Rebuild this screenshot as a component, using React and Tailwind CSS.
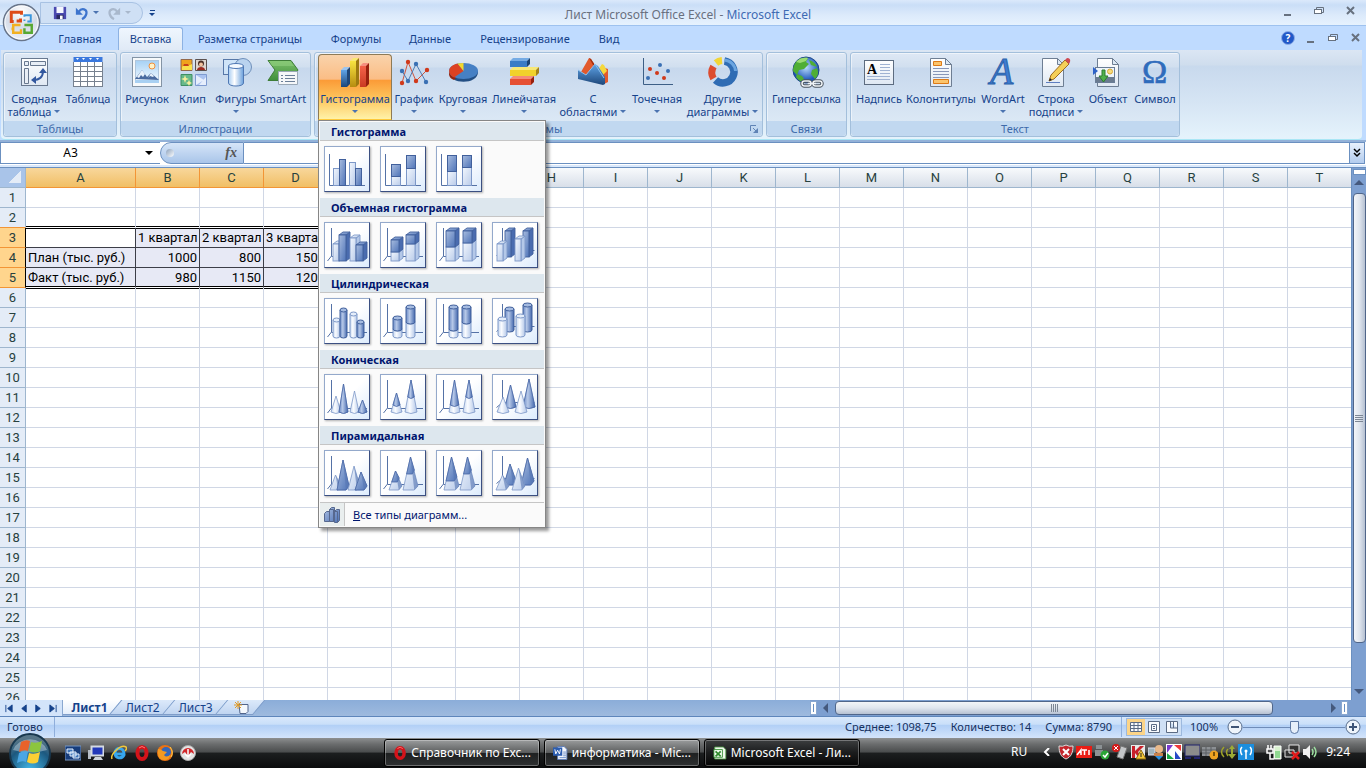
import React, { useState } from "react";
import clsx from "clsx";

const UI_FONT = "font-['Noto_Sans','Open_Sans',sans-serif]";
const CELL_FONT = "font-[Roboto,'Noto_Sans',sans-serif]";

const TABS = [
  { label: "Главная", width: "w-[76px]" },
  { label: "Вставка", width: "w-[65px]" },
  { label: "Разметка страницы", width: "w-[134px]" },
  { label: "Формулы", width: "w-[78px]" },
  { label: "Данные", width: "w-[70px]" },
  { label: "Рецензирование", width: "w-[120px]" },
  { label: "Вид", width: "w-12" },
];

/* ---------- ribbon icons, all on a 32x32 grid ---------- */

const Icon = ({ children }) => (
  <svg viewBox="0 0 32 32" className="w-8 h-8 shrink-0 overflow-visible" aria-hidden="true">
    {children}
  </svg>
);

const PivotIcon = () => (
  <Icon>
    <rect x="3.500" y="2.500" width="26" height="27" fill="url(#paper)" stroke="#68788f" />
    <path d="M6.500 5.500h4v4h-4zM12.500 5.500h15v4h-15zM6.500 12.500h4v15h-4z" fill="#e8eef6" stroke="#68788f" />
    <path d="M15 24c7 0 10-3 10-9" fill="none" stroke="#33589f" strokeWidth="2" />
    <path d="M25 12l-4 5h8zM13 24l5-4v8z" fill="#33589f" />
  </Icon>
);

const TableIcon = () => (
  <Icon>
    <rect x="2" y="1" width="28" height="29" fill="#fff" />
    <rect x="1.500" y="1" width="29" height="5" fill="#3b78dd" />
    <path d="M4 2h3l-1.500 2zM10 2h3l-1.500 2zM17 2h3l-1.500 2zM24 2h3l-1.500 2z" fill="#fff" />
    <path d="M1.500 6v24M8.500 6v24M15.500 6v24M22.500 6v24M30.500 6v24M1 10.500h30M1 15.500h30M1 20.500h30M1 25.500h30M1 30.500h30" stroke="#77818f" />
  </Icon>
);

const PictureIcon = () => (
  <Icon>
    <rect x="1.500" y="1.500" width="29" height="29" fill="#f6f9fb" stroke="#8494a5" />
    <rect x="4.500" y="4.500" width="23" height="20" fill="url(#sky)" stroke="#b0c6dc" />
    <circle cx="21" cy="10" r="3" fill="#fff3c8" stroke="#f09040" />
    <path d="M4 23l7-9 5 7 4-4 8 7z" fill="#496a9f" />
    <path d="M11 14l3 4-2 3-2-2-2 3-2-1zM20 17l3 3-1 1-3-1-2 2z" fill="#e9f2fb" />
    <path d="M4 24h24v3H4z" fill="#a8d0f2" />
  </Icon>
);

const ClipIcon = () => (
  <Icon>
    <path d="M4 3.500h11v11H4z" fill="#f0a21c" stroke="#94694a" />
    <path d="M5 11c3-4 6 0 10-3v6H5z" fill="#f9e04c" />
    <path d="M7 8h4l1 2H6z" fill="#c8401a" />
    <path d="M18.500 3.500h11v11h-11z" fill="#ddd5cf" stroke="#5b5150" />
    <circle cx="24" cy="7.500" r="3" fill="#4d2f26" />
    <circle cx="24" cy="8.500" r="2" fill="#f3c3a0" />
    <path d="M20 14c0-4 8-4 8 0z" fill="#9c2a20" />
    <path d="M4 18.500h11v11H4z" fill="#67b98b" stroke="#3f8e64" />
    <path d="M8 19l1 3 3 1-3 1-1 3-1-3-3-1 3-1zM12 24l1 2 2 1-2 1-1 2-1-2-2-1 2-1z" fill="#f7ee9c" />
    <path d="M18.500 18.500h11v11h-11z" fill="#a9c2f0" stroke="#7f9bd0" />
    <path d="M19 19l8 5-8 5zM29 21v8h-7z" fill="#e6eefc" />
  </Icon>
);

const ShapesIcon = () => (
  <Icon>
    <rect x="3.500" y="3.500" width="17" height="15" fill="#cfe4f8" stroke="#5878a8" />
    <circle cx="23" cy="11" r="8.500" fill="#b9d3ef" stroke="#6f8fba" />
    <path d="M8.500 10v17c0 4 15 4 15 0V10z" fill="url(#cyl)" stroke="#4f78b4" />
    <ellipse cx="16" cy="10" rx="7.500" ry="2.500" fill="#f3f9ff" stroke="#4f78b4" />
  </Icon>
);

const SmartArtIcon = () => (
  <Icon>
    <path d="M1 4.500h23l7 9.500-7 10.500H1L8 14z" fill="url(#green)" stroke="#3e7d38" />
    <path d="M2 5h21l4 5H5z" fill="#8fce7f" opacity=".6" />
    <path d="M11.500 15.500h19v13h-19z" fill="#f5f7f9" stroke="#9aa8b6" />
    <path d="M14 19.500h2M18 19.500h10M14 22.500h2M18 22.500h10M14 25.500h2M18 25.500h10" stroke="#6b7f98" />
  </Icon>
);

const Block = ({ x, y, w, h, face, top, side }) => (
  <g>
    <path d={`M${x} ${y}h${w}v${h}h${-w}z`} fill={face} />
    <path d={`M${x} ${y}l3-3h${w}l-3 3z`} fill={top} />
    <path d={`M${x + w} ${y}l3-3v${h}l-3 3z`} fill={side} />
  </g>
);

const ColumnIcon = () => (
  <Icon>
    <Block x={2} y={14} w={6} h={17} face="url(#blueV)" top="#9cc4ee" side="#1f4779" />
    <Block x={11} y={5} w={6} h={26} face="url(#yellowV)" top="#f8e870" side="#9d7a10" />
    <Block x={21} y={10} w={6} h={21} face="url(#redV)" top="#f59080" side="#97200e" />
  </Icon>
);

const LineIcon = () => (
  <Icon>
    <path d="M4 27l6-21 8 19 11-11" fill="none" stroke="#d2553c" />
    <path d="M4 15l6 10 8-17 10 18" fill="none" stroke="#4d7cb4" />
    <g fill="#d0391b">
      <circle cx="4" cy="27" r="2.200" />
      <circle cx="10" cy="6" r="2.200" />
      <circle cx="18" cy="25" r="2.200" />
      <circle cx="29" cy="14" r="2.200" />
    </g>
    <g fill="#3a70b4">
      <circle cx="4" cy="15" r="2.200" />
      <circle cx="10" cy="25" r="2.200" />
      <circle cx="18" cy="8" r="2.200" />
      <circle cx="28" cy="26" r="2.200" />
    </g>
  </Icon>
);

const PieIcon = () => (
  <Icon>
    <path d="M2 16c0 13 29 13 29 0v-1H2z" fill="#234f84" />
    <path d="M2 15v3c0 3 2 5 5 6l3-3z" fill="#97250f" />
    <ellipse cx="16.500" cy="15" rx="14.500" ry="8" fill="#4680c4" />
    <path d="M16.500 15L7 21.500C0 18 0 10 10.500 7.500z" fill="#dd4222" />
    <path d="M16.500 15l-6-7.500q3-.5 6-.5z" fill="#f2d82c" />
  </Icon>
);

const BarIcon = () => (
  <Icon>
    <Block x={2} y={5} w={17} h={6} face="#3a7cc6" top="#76abe4" side="#1c4473" />
    <Block x={2} y={14} w={26} h={6} face="#f1d22c" top="#f7e878" side="#a5841a" />
    <Block x={2} y={23} w={21} h={6} face="#e65034" top="#f58c78" side="#97200e" />
  </Icon>
);

const AreaIcon = () => (
  <Icon>
    <path d="M4 16l8-14 2 1 8 13 6-4 3 1v13l-4 2-20-8z" fill="#e2592c" />
    <path d="M12 2l2 1 8 12-2 1z" fill="#a5300f" />
    <path d="M21 14l4-6 2 1 3 6-5 5z" fill="#f5d83c" />
    <path d="M1 14l8 5 9-11 3 2 7 11v7l-2 1-25-6z" fill="url(#blueV)" />
    <path d="M1 14l8 5 9-11 9 14" fill="none" stroke="#8cc0ee" />
  </Icon>
);

const ScatterIcon = () => (
  <Icon>
    <path d="M2.500 2v26.500H32" fill="none" stroke="#3d5f86" />
    <g fill="#d0391b">
      <circle cx="9" cy="13" r="2" />
      <circle cx="16" cy="17" r="2" />
      <circle cx="23" cy="22" r="2" />
    </g>
    <g fill="#3a70b4">
      <circle cx="7" cy="22" r="2" />
      <circle cx="19" cy="9" r="2" />
      <circle cx="27" cy="15" r="2" />
    </g>
  </Icon>
);

const DoughnutIcon = () => (
  <Icon>
    <path d="M17.500 5a11 11 0 1 1-9 19" fill="none" stroke="#2f6cb4" strokeWidth="7.500" />
    <path d="M17.500 4a12 12 0 0 1 11 11" fill="none" stroke="#6ba5e0" strokeWidth="3" />
    <path d="M6.500 22.500a12 12 0 0 1 0-12" fill="none" stroke="#dc4c30" strokeWidth="7" />
    <path d="M9 7a11 11 0 0 1 6-2.500" fill="none" stroke="#f2d536" strokeWidth="7" />
  </Icon>
);

const LinkIcon = () => (
  <Icon>
    <circle cx="15" cy="14" r="13" fill="url(#globe)" stroke="#1e4687" />
    <path d="M5 6c3-4 8-5 12-4l-2 4 3 2-5 5-5 1-2 5-4-4c0-4 1-6 3-9zM18 4c4 1 7 4 8 7l-6-2zM21 14l5-2c2 5 1 8-2 11l-4-5zM6 18l5 2 4 6c-5 0-8-2-10-5z" fill="#4fae34" />
    <path d="M5 6c3-4 8-5 12-4l-2 3-6 2z" fill="#9adb72" />
    <g fill="none" stroke="#4b5560" strokeWidth="3.500">
      <rect x="11" y="25" width="9" height="5" rx="2.500" />
      <rect x="22" y="25" width="9" height="5" rx="2.500" />
    </g>
    <g fill="none" stroke="#eef2f5" strokeWidth="1.500">
      <rect x="11" y="25" width="9" height="5" rx="2.500" />
      <rect x="22" y="25" width="9" height="5" rx="2.500" />
      <path d="M17 27.500h8" />
    </g>
  </Icon>
);

const TextBoxIcon = () => (
  <Icon>
    <rect x="1.500" y="4.500" width="29" height="24" fill="url(#paper)" stroke="#5d6c80" />
    <text x="4" y="18" fontFamily="Liberation Serif, serif" fontWeight="bold" fontSize="14" fill="#000">A</text>
    <path d="M17 8.500h10M17 11.500h10M17 14.500h10M17 17.500h10M4 20.500h23M4 23.500h23" stroke="#9fb2d2" />
  </Icon>
);

const Page = () => (
  <>
    <path d="M5.500 2.500h15l6 6v22h-21z" fill="url(#paper)" stroke="#6e7e93" />
    <path d="M20.500 2.500v6h6z" fill="#dce8f4" stroke="#6e7e93" />
  </>
);

const HeaderFooterIcon = () => (
  <Icon>
    <Page />
    <path d="M8.500 5.500h8v4h-8zM8.500 23.500h15v4h-15z" fill="#fbc46c" stroke="#dd7a16" />
    <path d="M8 12.500h16M8 15.500h16M8 18.500h16M8 21.500h16" stroke="#8896b8" />
  </Icon>
);

const WordArtIcon = () => (
  <Icon>
    <g fontFamily="Liberation Serif, serif" fontStyle="italic" fontSize="38">
      <text x="3" y="28" fill="#3d7cd0" stroke="#2b62ab">A</text>
    </g>
  </Icon>
);

const SignatureIcon = () => (
  <Icon>
    <path d="M2.500 2.500h15l6 6v22h-21z" fill="url(#paper)" stroke="#6e7e93" />
    <path d="M17.500 2.500v6h6z" fill="#dce8f4" stroke="#6e7e93" />
    <path d="M6 26.500h14" stroke="#5e7ec0" />
    <path d="M9 25l2-6L25 4l4 4-15 15z" fill="#f5cf58" stroke="#9d6b20" />
    <path d="M25 4l2-2q4 0 3 4l-1 2z" fill="#cf4a52" />
    <path d="M9 25l1-3 2 2z" fill="#222" />
  </Icon>
);

const ObjectIcon = () => (
  <Icon>
    <Page />
    <rect x="3.500" y="11.500" width="19" height="15" fill="#eef4fa" stroke="#6a7d96" />
    <path d="M4 21h18v5H4z" fill="#6a7b90" />
    <circle cx="18" cy="15.500" r="2.500" fill="#f7dc7c" stroke="#d8a838" />
    <path d="M10 14h3v6h3l-4.500 6L7 20h3z" fill="#4fb04a" stroke="#2c7c30" />
    <path d="M1 11l5 4-5 4z" fill="#2d62c8" />
  </Icon>
);

const SymbolIcon = () => (
  <Icon>
    <text x="3" y="27" fontFamily="Liberation Serif, serif" fontSize="34" fill="#2f6cbc" stroke="#2f6cbc" strokeWidth=".6">Ω</text>
  </Icon>
);

const GROUPS = [
  {
    name: "Таблицы",
    items: [
      { lines: ["Сводная", "таблица"], icon: PivotIcon, width: "w-14", arrow: true },
      { lines: ["Таблица"], icon: TableIcon, width: "w-[52px]" },
    ],
  },
  {
    name: "Иллюстрации",
    items: [
      { lines: ["Рисунок"], icon: PictureIcon, width: "w-12" },
      { lines: ["Клип"], icon: ClipIcon, width: "w-[43px]" },
      { lines: ["Фигуры"], icon: ShapesIcon, width: "w-11", arrow: true },
      { lines: ["SmartArt"], icon: SmartArtIcon, width: "w-[50px]" },
    ],
  },
  {
    name: "Диаграммы",
    launcher: true,
    items: [
      { lines: ["Гистограмма"], icon: ColumnIcon, width: "w-[74px]", arrow: true, open: true },
      { lines: ["График"], icon: LineIcon, width: "w-11", arrow: true },
      { lines: ["Круговая"], icon: PieIcon, width: "w-[54px]", arrow: true },
      { lines: ["Линейчатая"], icon: BarIcon, width: "w-[68px]", arrow: true },
      { lines: ["С", "областями"], icon: AreaIcon, width: "w-[70px]", arrow: true },
      { lines: ["Точечная"], icon: ScatterIcon, width: "w-[58px]", arrow: true },
      { lines: ["Другие", "диаграммы"], icon: DoughnutIcon, width: "w-[73px]", arrow: true },
    ],
  },
  {
    name: "Связи",
    items: [{ lines: ["Гиперссылка"], icon: LinkIcon, width: "w-[75px]" }],
  },
  {
    name: "Текст",
    items: [
      { lines: ["Надпись"], icon: TextBoxIcon, width: "w-[52px]" },
      { lines: ["Колонтитулы"], icon: HeaderFooterIcon, width: "w-[72px]" },
      { lines: ["WordArt"], icon: WordArtIcon, width: "w-[52px]", arrow: true },
      { lines: ["Строка", "подписи"], icon: SignatureIcon, width: "w-[54px]", arrow: true },
      { lines: ["Объект"], icon: ObjectIcon, width: "w-[50px]" },
      { lines: ["Символ"], icon: SymbolIcon, width: "w-11" },
    ],
  },
];

/* ---------- chart gallery ---------- */

// x, width, top, bottom, split (everything above split is dark)
const FLAT = [
  [[9, 6, 22, 39, 0], [15, 6, 13, 39, 39], [25, 6, 16, 39, 0], [31, 6, 22, 39, 39]],
  [[11, 9, 18, 39, 30], [26, 9, 9, 39, 22]],
  [[11, 9, 9, 39, 25], [26, 9, 9, 39, 21]],
];
const BOX = [
  [[9, 6, 22, 39, 0], [15, 7, 13, 39, 39], [26, 6, 16, 39, 0], [32, 7, 23, 39, 39]],
  [[11, 8, 18, 39, 30], [26, 9, 13, 39, 22]],
  [[10, 9, 9, 39, 25], [27, 9, 9, 39, 21]],
  [[13, 6, 9, 35, 35], [31, 6, 9, 35, 35], [5, 6, 22, 39, 0], [23, 6, 17, 39, 0]],
];
const ROUND = [
  [[9, 7, 22, 38, 0], [16, 7, 12, 38, 38], [26, 7, 16, 38, 0], [33, 7, 24, 38, 38]],
  [[13, 9, 20, 38, 31], [26, 9, 9, 38, 24]],
  [[13, 9, 9, 38, 31], [26, 9, 9, 38, 24]],
  [[13, 9, 11, 32, 32], [31, 9, 7, 32, 32], [6, 9, 21, 37, 0], [24, 9, 18, 37, 0]],
];
const CONES = [
  [[7, 10, 22, 39, 0], [15, 9, 10, 39, 39], [26, 9, 17, 39, 0], [34, 9, 26, 39, 39]],
  [[11, 11, 19, 39, 32], [25, 12, 6, 39, 24]],
  [[13, 11, 6, 39, 32], [27, 12, 6, 39, 24]],
  [[13, 11, 11, 34, 34], [31, 12, 5, 34, 34], [5, 12, 23, 39, 0], [23, 12, 17, 39, 0]],
];
const PYRAMIDS = [
  [[6, 11, 25, 40, 0], [13, 12, 10, 40, 40], [24, 12, 16, 40, 0], [31, 12, 22, 40, 40]],
  [[9, 13, 21, 40, 32], [23, 15, 7, 40, 24]],
  [[8, 15, 7, 40, 31], [24, 15, 7, 40, 24]],
  [[12, 12, 14, 35, 35], [29, 13, 8, 35, 35], [4, 13, 25, 40, 0], [20, 13, 18, 40, 0]],
];
const SHAPES = { flat: FLAT, box: BOX, cylinder: ROUND, cone: CONES, pyramid: PYRAMIDS };

const GALLERY = [
  { title: "Гистограмма", kind: "flat", count: 3 },
  { title: "Объемная гистограмма", kind: "box", count: 4 },
  { title: "Цилиндрическая", kind: "cylinder", count: 4 },
  { title: "Коническая", kind: "cone", count: 4 },
  { title: "Пирамидальная", kind: "pyramid", count: 4 },
];

const Segment = ({ kind, x, w, top, bottom, dark }) => {
  const fill = dark ? "url(#dark)" : "url(#light)";
  const stroke = dark ? "#41609c" : "#7d98c8";
  const h = bottom - top;
  if (kind === "flat") {
    return <rect x={x + 0.5} y={top + 0.5} width={w} height={h} fill={fill} stroke={stroke} />;
  }
  if (kind === "box") {
    return (
      <g fill={fill} stroke={stroke} strokeWidth=".9">
        <path d={`M${x + w} ${top}l4-3v${h}l-4 3z`} fill={dark ? "#4a6caf" : "#b4c8e8"} />
        <path d={`M${x} ${top}l4-3h${w}l-4 3z`} />
        <rect x={x} y={top} width={w} height={h} />
      </g>
    );
  }
  const r = w / 2;
  return (
    <g fill={dark ? "url(#darkRound)" : "url(#lightRound)"} stroke={stroke}>
      <path d={`M${x} ${top}v${h}a${r} 2 0 0 0 ${w} 0v${-h}z`} />
      <ellipse cx={x + r} cy={top} rx={r} ry="2" fill={dark ? "#a5bbe0" : "#e4edfa"} />
    </g>
  );
};

const Spike = ({ kind, x, w, top, bottom, split }) => {
  const cx = x + w / 2;
  const outline = (b, half) =>
    kind === "cone"
      ? `M${cx} ${top}L${cx - half} ${b - 1}q${half} 3 ${half * 2} 0z`
      : `M${cx} ${top}L${cx - half} ${b}h${half * 1.5}l${half / 2}-4z`;
  const part = (split - top) / (bottom - top);
  const round = kind === "cone";
  return (
    <g strokeWidth=".8">
      <path d={outline(bottom, w / 2)} fill={round ? "url(#lightRound)" : "url(#light)"} stroke="#7d98c8" />
      {split > 0 && <path d={outline(split, (w / 2) * part)} fill={round ? "url(#darkRound)" : "url(#dark)"} stroke="#4866a4" />}
      {kind === "pyramid" && (
        <path d={`M${cx} ${top}L${cx + w / 4} ${bottom}L${cx + w / 2} ${bottom - 4}z`} fill="#5676b2" opacity=".6" />
      )}
    </g>
  );
};

const Thumb = ({ kind, variant }) => {
  const pointed = kind === "cone" || kind === "pyramid";
  return (
    <svg viewBox="1 1 44 44" className="w-11 h-11 block" aria-hidden="true">
      {kind === "flat" ? (
        <path d="M5.500 8v31.500H41" fill="none" stroke="#5572a6" />
      ) : variant === 3 ? (
        <path d="M10.500 6v22.500l-6 5M10.500 28.500h32" fill="none" stroke="#5572a6" />
      ) : (
        <path d="M7.500 6v28l-4 5M7.500 34.500H43" fill="none" stroke="#5572a6" />
      )}
      {SHAPES[kind][variant].map(([x, w, top, bottom, split], i) => {
        if (pointed) {
          return <Spike key={i} kind={kind} x={x} w={w} top={top} bottom={bottom} split={split} />;
        }
        const mixed = split > 0 && split < bottom;
        return (
          <g key={i}>
            <Segment kind={kind} x={x} w={w} top={mixed ? split : top} bottom={bottom} dark={split === bottom} />
            {mixed && <Segment kind={kind} x={x} w={w} top={top} bottom={split} dark />}
          </g>
        );
      })}
    </svg>
  );
};

const ChartMenu = () => (
  <div className="absolute left-0 top-full z-30 w-[228px] border border-[#868686] bg-[#fafafa] p-px shadow-[3px_3px_3px_rgba(0,0,0,0.4)]">
    {GALLERY.map((section) => (
      <section key={section.title}>
        <h3 className="h-[19px] border-b border-[#c5c5c5] bg-[#dde7ee] pl-[11px] text-[11px] leading-[19px] font-bold text-[#00156e]">
          {section.title}
        </h3>
        <div className="flex h-[57px] gap-[10px] px-1 pt-[5px]">
          {Array.from({ length: section.count }, (_, i) => (
            <button
              key={i}
              aria-label={`${section.title} ${i + 1}`}
              className="h-[46px] w-[46px] border border-t-[#94a9cb] border-l-[#94a9cb] border-r-[#3b4f81] border-b-[#3b4f81] bg-gradient-to-br from-white via-white to-[#dcebfc] shadow-[1px_1px_2px_rgba(0,0,0,0.3)]"
            >
              <Thumb kind={section.kind} variant={i} />
            </button>
          ))}
        </div>
      </section>
    ))}
    <button className="flex h-6 w-full items-stretch border-t border-[#c5c5c5] text-left text-[11px] text-[#00156e]">
      <span className="flex w-[25px] items-center justify-center border-r border-[#c5c5c5] bg-[#e9eeee]">
        <svg viewBox="0 0 18 18" className="h-[18px] w-[18px]" aria-hidden="true">
          <g fill="url(#dark)" stroke="#56688f">
            <path d="M1.500 7.500l2-2h3v10h-5zM6.500 3.500l2-2h3v14h-5zM11.500 5.500l2-2h3v11l-2 2h-3z" />
            <path d="M11.500 5.500h3v11M6.500 3.500h4v12" fill="none" />
          </g>
        </svg>
      </span>
      <span className="pl-2 leading-[23px]">
        <u>В</u>се типы диаграмм...
      </span>
    </button>
  </div>
);

/* ---------- ribbon ---------- */

const Arrow = () => <span className="inline-block border-x-[3px] border-t-[3px] border-x-transparent border-t-[#4b73b0]" />;

const RibbonButton = ({ item }) => {
  const Glyph = item.icon;
  const last = item.lines.length - 1;
  return (
    <div className="relative">
      <button
        aria-expanded={item.open}
        className={clsx(
          "flex h-[66px] flex-col items-center whitespace-nowrap border pt-px text-[11px] leading-[13px] text-[#15428b]",
          item.width,
          item.open
            ? "rounded-t-sm border-[#8e7a55] border-b-[#ffca3a] bg-[linear-gradient(#f9d3ab_0%,#fbbd85_38%,#fb9a36_39%,#fdc860_70%,#fff2a8_100%)]"
            : "border-transparent"
        )}
      >
        <Glyph />
        <span className="mt-1">{item.lines[0]}</span>
        {last > 0 ? (
          <span className="flex items-center gap-[3px]">
            {item.lines[1]}
            <Arrow />
          </span>
        ) : (
          item.arrow && (
            <span className="mt-[5px] flex">
              <Arrow />
            </span>
          )
        )}
      </button>
      {item.open && <ChartMenu />}
    </div>
  );
};

const Ribbon = () => (
  <div className="mr-1 ml-px flex h-[90px] gap-[3px] rounded-b border-b border-[#a9e6f5] bg-[linear-gradient(#dbe6f4_0%,#cfdded_17%,#c8d9ed_18%,#d6e5f4_60%,#e5f3fc_100%)] px-[2px] pt-[2px] pb-[2px]">
    {GROUPS.map((group) => (
      <section key={group.name} className="flex flex-col rounded-[3px] border border-[#a3bfdb] bg-[linear-gradient(#dee8f5_0%,#d1dfef_17%,#c7d8ed_18%,#dbe8f5_82%)] shadow-[inset_1px_1px_0_rgba(255,255,255,0.5)]">
        <div className={clsx("flex h-[68px] items-start pt-px", group.launcher ? "px-[3px]" : "px-[2px]")}>
          {group.items.map((item) => (
            <RibbonButton key={item.lines.join(" ")} item={item} />
          ))}
        </div>
        <div className="flex flex-1 items-center rounded-b-sm bg-[#c1d8f0]">
          <span className="flex-1 text-center text-[11px] leading-[15px] text-[#3e6aaa]">{group.name}</span>
          {group.launcher && (
            <button aria-label="Диаграммы: параметры" className="pr-1 pl-1">
              <svg viewBox="0 0 8 8" className="h-2 w-2" aria-hidden="true">
                <path d="M.5 6V.5H6M3 3l3 3" fill="none" stroke="#5f83b5" />
                <path d="M8 3v5H3z" fill="#5f83b5" />
              </svg>
            </button>
          )}
        </div>
      </section>
    ))}
  </div>
);

/* ---------- window chrome ---------- */

const OfficeButton = () => (
  <button aria-label="Кнопка Office" className="absolute top-[3px] left-[2px] z-20 h-[39px] w-[39px]">
    <svg viewBox="0 0 40 40" className="h-full w-full" aria-hidden="true">
      <circle cx="20" cy="20" r="18.500" fill="url(#orb)" stroke="#68758a" strokeWidth="1.500" />
      <circle cx="20" cy="20" r="17" fill="none" stroke="#fff" opacity=".8" />
      <g fill="none">
        <path d="M20 12V9.500H9.500v9.500H12M15 18.500h4V16" stroke="#dd4a18" strokeWidth="3" />
        <path d="M23 14v-1.500h6.500V19H26M23 17v1.500" stroke="#3b96dc" strokeWidth="2" />
        <path d="M19 22.500h-7.500v8h8V27M11 25v3" stroke="#f2b020" strokeWidth="2.500" />
        <path d="M23 22.500h7.500v8H23V26" stroke="#58a832" strokeWidth="2.500" />
      </g>
    </svg>
  </button>
);

const WindowButtons = ({ small }) => (
  <div className={clsx("flex items-center text-[#6b7585]", small ? "gap-[11px]" : "gap-5")}>
    <button aria-label="Свернуть" className="flex h-3 w-3 items-end justify-center">
      <span className="mb-px h-[2px] w-[7px] bg-[#67717f]" />
    </button>
    <button aria-label="Восстановить" className="h-3 w-3">
      <svg viewBox="0 0 12 12" className="h-3 w-3" aria-hidden="true">
        <path d="M3.500 4V2.500h7v5H9" fill="none" stroke="#67717f" />
        <rect x="1.500" y="4.500" width="7" height="4" fill="#fff" stroke="#67717f" />
        <path d="M1 4.500h8" stroke="#67717f" />
      </svg>
    </button>
    <button aria-label="Закрыть" className="h-3 w-3">
      <svg viewBox="0 0 12 12" className="h-3 w-3" aria-hidden="true">
        <path d="M2 2l7 7M9 2l-7 7" stroke="#67717f" strokeWidth="2" />
      </svg>
    </button>
  </div>
);

const TitleBar = () => (
  <header className="relative flex h-[25px] items-center bg-[linear-gradient(#dbe9fb_0%,#cadef7_20%,#dceafb_60%,#e6f2fe_100%)] pl-[40px]">
    <div className="flex h-[22px] w-[103px] items-center rounded-r-full border border-[#a8c2e3] bg-[#cfe0f5] pl-3">
      <button aria-label="Сохранить">
        <svg viewBox="0 0 16 16" className="h-[14px] w-[14px]" aria-hidden="true">
          <path d="M1 1h14v14H1z" fill="#4a49b0" />
          <path d="M4 1h8v7H4z" fill="#f4f6ff" />
          <path d="M4 10h8v5H4z" fill="#2a2a60" />
          <path d="M8 11h3v4H8z" fill="#fff" />
        </svg>
      </button>
      <button aria-label="Отменить" className="ml-2">
        <svg viewBox="0 0 16 16" className="h-[14px] w-[14px]" aria-hidden="true">
          <path d="M4 7c4-6 10-3 9 2q-1 4-5 6" fill="none" stroke="#3d74cd" strokeWidth="2.500" />
          <path d="M1 2v8h8z" fill="#3d74cd" />
        </svg>
      </button>
      <span className="ml-1 flex"><Arrow /></span>
      <button aria-label="Повторить" className="ml-2">
        <svg viewBox="0 0 16 16" className="h-[14px] w-[14px]" aria-hidden="true">
          <path d="M12 7C8 1 2 4 3 9q1 4 5 6" fill="none" stroke="#a9b8cc" strokeWidth="2.500" />
          <path d="M15 2v8H7z" fill="#a9b8cc" />
        </svg>
      </button>
      <span className="ml-1 border-x-[3px] border-t-[3px] border-x-transparent border-t-[#a9b8cc]" />
    </div>
    <button aria-label="Настройка панели быстрого доступа" className="ml-[6px] flex flex-col items-center gap-[2px]">
      <span className="h-px w-[5px] bg-[#15428b]" />
      <span className="border-x-[3px] border-t-[3px] border-x-transparent border-t-[#15428b]" />
    </button>
    <h1 className="flex-1 pt-1 text-center text-[12px] leading-4 text-[#69707f]">
      Лист Microsoft Office Excel - <span className="text-[#3e6ab3]">Microsoft Excel</span>
    </h1>
    <div className="pr-[9px] pb-1 pl-[60px]">
      <WindowButtons />
    </div>
  </header>
);

const TabStrip = ({ active, onSelect }) => (
  <nav className="flex h-[25px] border-t border-[#9ec2ef] bg-[#bfdbff] pl-[42px]">
    {TABS.map((tab) => (
      <button
        key={tab.label}
        onClick={() => onSelect(tab.label)}
        className={clsx(
          "mt-px border border-b-0 whitespace-nowrap text-center text-[11px] leading-5 text-[#15428b]",
          tab.width,
          active === tab.label
            ? "relative z-10 rounded-t-[3px] border-[#8db2e3] bg-gradient-to-b from-[#eff6fe] to-[#e0eaf6]"
            : "border-transparent"
        )}
      >
        {tab.label}
      </button>
    ))}
    <div className="flex flex-1 items-center justify-end gap-[9px] pr-1">
      <button aria-label="Справка" className="h-[14px] w-[14px] rounded-full border border-[#8eaee8] bg-[#2158c8] text-[10px] leading-3 font-bold text-white">
        ?
      </button>
      <WindowButtons small />
    </div>
  </nav>
);

const FormulaBar = () => (
  <div className="flex h-[27px] border-y-2 border-t-[#93b1d8] border-b-[#d9e8fb] bg-white">
    <div className="flex h-[22px] w-[160px] items-center border-y border-l border-[#6b90c0]">
      <input aria-label="Имя" defaultValue="A3" className="w-[138px] bg-transparent pl-px text-center text-[12px] leading-5 text-black outline-none" />
      <button aria-label="Список имен" className="ml-[6px] border-x-4 border-t-4 border-x-transparent border-t-black" />
    </div>
    <div className="flex h-[22px] w-[84px] items-center justify-between rounded-l-full border border-[#6b90c0] bg-gradient-to-b from-[#d6e5f8] to-[#a9c5e9] pr-[6px] pl-[5px]">
      <span className="h-2 w-2 rounded-full bg-gradient-to-br from-[#8da2bc] to-white" />
      <button aria-label="Вставить функцию" className="font-['Liberation_Serif',serif] text-[14px] leading-4 font-bold text-[#555] italic">
        fx
      </button>
    </div>
    <input aria-label="Строка формул" className="h-[22px] flex-1 border-y border-[#6b90c0] bg-white px-1 text-[12px] outline-none" />
    <button aria-label="Развернуть" className="mr-px flex h-[22px] w-4 items-center justify-center border border-[#6b90c0] bg-gradient-to-b from-[#e8f1fc] to-[#b3ccee]">
      <svg viewBox="0 0 8 10" className="h-[10px] w-2" aria-hidden="true">
        <path d="M1 1l3 3 3-3M1 5l3 3 3-3" fill="none" stroke="#000" strokeWidth="1.500" />
      </svg>
    </button>
  </div>
);

/* ---------- worksheet ---------- */

const COLUMNS = "ABCDEFGHIJKLMNOPQRST".split("");
const ROWS = Array.from({ length: 26 }, (_, i) => i + 1);
const DATA = {
  3: ["", "1 квартал", "2 квартал", "3 квартал"],
  4: ["План (тыс. руб.)", 1000, 800, 1500],
  5: ["Факт (тыс. руб.)", 980, 1150, 1200],
};

const cellClass = (row, col) => {
  const inTable = col < 5;
  if (!inTable || row < 2 || row > 6) return "border-[#d0d7e5]";
  if (row === 2) return "border-r-[#d0d7e5] border-b-white shadow-[inset_0_-1px_0_#000]";
  if (row === 6) return "border-[#d0d7e5] shadow-[inset_0_1px_0_#000]";
  return clsx(
    "border-r-[#3c3e48]",
    row === 3 && "border-b-[#3c3e48] shadow-[inset_0_1px_0_#000]",
    row === 4 && "border-b-[#3c3e48]",
    row === 5 && "border-b-white shadow-[inset_0_-1px_0_#000]",
    row === 3 && col === 0 ? "bg-white" : "bg-[#e7e9f5]"
  );
};

const Worksheet = () => (
  <main className="flex min-h-0 flex-1 border-t border-[#6b90c0]">
    <div className="min-w-0 flex-1 overflow-hidden bg-white">
      <table className={clsx("w-[1352px] table-fixed border-separate border-spacing-0 text-[13px] leading-[19px] text-black", CELL_FONT)}>
        <colgroup>
          <col className="w-[26px]" />
          <col className="w-[110px]" />
          {COLUMNS.slice(1).map((c) => (
            <col key={c} className="w-16" />
          ))}
        </colgroup>
        <thead>
          <tr className="h-5 text-[#27413e]">
            <th className="border-r border-b border-[#9eb6ce] bg-[#a9c4e9] p-0 align-bottom">
              <span className="mr-1 mb-1 ml-auto block h-3 w-3 bg-[linear-gradient(135deg,transparent_50%,#e4ecf7_50%)]" />
            </th>
            {COLUMNS.map((c, i) => (
              <th
                key={c}
                scope="col"
                className={clsx(
                  "h-5 border-r border-b p-0 font-normal",
                  i < 5
                    ? "border-[#f29536] bg-gradient-to-b from-[#f8d79b] to-[#f1bf64]"
                    : "border-[#9eb6ce] bg-gradient-to-b from-[#f8fafc] to-[#d8dfe9]"
                )}
              >
                {c}
              </th>
            ))}
          </tr>
        </thead>
        <tbody>
          {ROWS.map((r) => (
            <tr key={r} className="h-5">
              <th
                scope="row"
                className={clsx(
                  "h-5 border-r border-b p-0 font-normal text-[#27413e]",
                  r > 2 && r < 6 ? "border-[#f29536] border-r-black bg-[#ffd58d]" : "border-[#9eb6ce] bg-[#e4ecf7]",
                  r === 2 && "border-b-[#f29536]"
                )}
              >
                {r}
              </th>
              {COLUMNS.map((c, i) => {
                const value = DATA[r]?.[i];
                return (
                  <td
                    key={c}
                    className={clsx(
                      "h-5 overflow-hidden border-r border-b px-[2px] py-0 whitespace-nowrap",
                      cellClass(r, i),
                      typeof value === "number" && "text-right"
                    )}
                  >
                    {value}
                  </td>
                );
              })}
            </tr>
          ))}
        </tbody>
      </table>
    </div>
    <div role="scrollbar" aria-label="Вертикальная прокрутка" aria-controls="root" aria-valuenow="0" className="flex w-[15px] flex-col items-center border-l border-[#6b90c0] bg-[#7d9fd0] text-[#3c5277]">
      <span className="mt-px h-[6px] w-[13px] border border-[#6b90c0] bg-white" />
      <span className="mt-[5px] mb-2 border-x-[5px] border-b-[5px] border-x-transparent border-b-[#45597d]" />
      <span className="flex w-[13px] flex-1 flex-col items-center justify-center gap-px rounded-sm border border-[#50668a] bg-gradient-to-r from-[#f3f5f8] via-[#dfe5ee] to-[#b6c1d2]">
        {[1, 2, 3, 4].map((n) => (
          <i key={n} className="h-px w-2 bg-[#7d8795]" />
        ))}
      </span>
      <span className="mt-[46px] mb-[6px] border-x-[5px] border-t-[5px] border-x-transparent border-t-[#45597d]" />
    </div>
  </main>
);

const SheetTab = ({ children, active, width, label }) => (
  <button
    aria-label={label}
    className={clsx(
      "relative h-[15px] text-[12px] leading-[15px] text-[#15428b]",
      width,
      active && "z-10 font-bold before:absolute before:inset-y-0 before:left-0 before:w-4 before:bg-gradient-to-b before:from-white before:to-[#e4eefb]"
    )}
  >
    <span
      className={clsx(
        "absolute inset-0 -skew-x-[40deg] border-r border-b border-[#7f9dc9]",
        active ? "bg-gradient-to-b from-white to-[#e4eefb]" : "bg-gradient-to-b from-[#dce9fa] to-[#c0d5f1]"
      )}
    />
    <span className="relative">{children}</span>
  </button>
);

const SheetBar = () => (
  <div className="flex h-[17px] border-b border-[#5e86bb] bg-gradient-to-b from-[#8badd9] to-[#9ebade]">
    <div className="flex w-[63px] items-center justify-between border-r border-[#8aa8d0] bg-[#d3e4fa] px-1">
      {["M2 1v8M9 1v8L4 5z", "M8 1v8L3 5z", "M3 1v8l5-4z", "M9 1v8M2 1v8l5-4z"].map((d) => (
        <button key={d} aria-label="Прокрутка листов">
          <svg viewBox="0 0 11 10" className="h-[9px] w-[10px]" aria-hidden="true">
            <path d={d} fill="#15428b" stroke="#15428b" />
          </svg>
        </button>
      ))}
    </div>
    <div className="flex flex-1 overflow-hidden">
      <SheetTab active width="w-[53px]">Лист1</SheetTab>
      <SheetTab width="w-[53px]">Лист2</SheetTab>
      <SheetTab width="w-[53px]">Лист3</SheetTab>
      <SheetTab width="w-[37px]" label="Вставить лист">
        <svg viewBox="0 0 16 14" className="ml-3 h-[14px] w-4" aria-hidden="true">
          <path d="M5 3.500h9v7l-2 2H6z" fill="#f4f8fd" stroke="#52658c" />
          <path d="M4 0v8M0 4h8M1 1l6 6M7 1L1 7" stroke="#e09b28" />
        </svg>
      </SheetTab>
    </div>
    <div className="flex w-[556px] items-center bg-[#7d9fd0]">
      <span className="flex h-[14px] w-[7px] items-center justify-center border border-[#8aa8d0] bg-white"><i className="h-2 w-px bg-[#6b90c0]" /></span>
      <span className="mr-[7px] ml-[6px] border-y-[5px] border-r-[5px] border-y-transparent border-r-[#45597d]" />
      <div role="scrollbar" aria-label="Горизонтальная прокрутка" aria-controls="root" aria-valuenow="0" className="flex h-[14px] flex-1 items-center justify-center gap-px rounded-sm border border-[#50668a] bg-gradient-to-b from-[#f3f5f8] via-[#dfe5ee] to-[#b6c1d2]">
        {[1, 2, 3, 4].map((n) => (
          <i key={n} className="h-2 w-px bg-[#7d8795]" />
        ))}
      </div>
      <span className="mr-[5px] ml-[58px] border-y-[5px] border-l-[5px] border-y-transparent border-l-[#45597d]" />
      <span className="mr-[18px] flex h-[14px] w-[7px] items-center justify-center border border-[#8aa8d0] bg-white"><i className="h-2 w-px bg-[#6b90c0]" /></span>
    </div>
  </div>
);

const ZoomButton = ({ label, d }) => (
  <button aria-label={label} className="h-4 w-4">
    <svg viewBox="0 0 16 16" className="h-4 w-4" aria-hidden="true">
      <circle cx="8" cy="8" r="7" fill="#eef4fb" stroke="#566b8a" />
      <path d={d} stroke="#3f5577" strokeWidth="2" />
    </svg>
  </button>
);

const VIEWS = [
  { label: "Обычный", d: "M2.500 2.500h11v9h-11zM2 5.500h12M2 8.500h12M6 2v10M10 2v10" },
  { label: "Разметка страницы", d: "M2.500 1.500h11v11h-11zM5.500 4.500h5v6h-5zM7 6.500h2M7 8.500h2" },
  { label: "Страничный", d: "M2.500 1.500h11v11h-11zM6.500 2v6h7M9.500 2v6" },
];

const StatusBar = () => (
  <footer className="flex h-[21px] items-center bg-[linear-gradient(#d9e8fb_0%,#c9dff9_35%,#b1cff6_38%,#d3e4fb_100%)] pb-px text-[11px] leading-4 whitespace-nowrap text-[#15315f]">
    <span className="h-5 w-[55px] border-r border-[#8faedb] pl-[7px] leading-5">Готово</span>
    <div className="flex flex-1 justify-end gap-[14px] pr-[9px]">
      <span>Среднее: 1098,75</span>
      <span>Количество: 14</span>
      <span>Сумма: 8790</span>
    </div>
    <div className="flex h-5 items-center border-l border-[#8faedb] pl-1">
      <div className="flex border border-[#9db9de]">
        {VIEWS.map((view, i) => (
          <button key={view.label} aria-label={view.label} className={clsx("px-px py-px", i === 0 ? "bg-[#fcd488]" : "bg-[#cfe0f5]")}>
            <svg viewBox="0 0 16 14" className="h-[14px] w-4" aria-hidden="true">
              <path d={view.d} fill="#f8fafd" stroke="#5b6b84" />
            </svg>
          </button>
        ))}
      </div>
      <span className="w-[45px] pl-2">100%</span>
      <ZoomButton label="Уменьшить" d="M4 8h8" />
      <input
        aria-label="Масштаб"
        type="range"
        defaultValue="50"
        className="h-4 w-[102px] appearance-none bg-[linear-gradient(#6f8cb8,#6f8cb8)] bg-[length:100%_1px] bg-center bg-no-repeat [&::-webkit-slider-thumb]:h-[13px] [&::-webkit-slider-thumb]:w-[9px] [&::-webkit-slider-thumb]:appearance-none [&::-webkit-slider-thumb]:rounded-b-full [&::-webkit-slider-thumb]:border [&::-webkit-slider-thumb]:border-[#5b77a3] [&::-webkit-slider-thumb]:bg-[#e6effa]"
      />
      <ZoomButton label="Увеличить" d="M4 8h8M8 4v8" />
      <span className="w-[5px]" />
    </div>
  </footer>
);

/* ---------- taskbar ---------- */

const OperaIcon = () => (
  <svg viewBox="0 0 16 16" className="h-4 w-4" aria-hidden="true">
    <ellipse cx="8" cy="8" rx="4.500" ry="6" fill="none" stroke="#d3131a" strokeWidth="4" />
    <path d="M5 3q3-3 6 0" stroke="#ff7a78" fill="none" />
  </svg>
);

const QUICK = [
  {
    label: "Переключение между окнами",
    art: <><rect width="16" height="14" y="1" fill="#173d7c" stroke="#7695c0" /><path d="M2 4h6v4H2zM5 7h6v4H5zM8 9h6v4H8z" fill="#3f74b8" stroke="#e8f2ff" /></>,
  },
  {
    label: "Сетевое подключение",
    art: <><path d="M0 5h3v9H0z" fill="#b5bcc6" /><path d="M3.500 1.500h12v9h-12z" fill="#2238b8" stroke="#d4dae2" strokeWidth="2" /><path d="M7 12h6l2 3H5z" fill="#cdd3da" /></>,
  },
  {
    label: "Internet Explorer",
    art: <><path d="M3 9h10c0-7-9-7-9-1s7 6 9 2" fill="none" stroke="#37a7ee" strokeWidth="3" /><path d="M1 14C-1 9 10-1 15 2c1 1 0 3-1 4" fill="none" stroke="#f1c83a" strokeWidth="1.500" /></>,
  },
  { label: "Opera", opera: true },
  {
    label: "Firefox",
    art: <><circle cx="8" cy="8" r="8" fill="#ea7213" /><circle cx="9" cy="7" r="5" fill="#3567b8" /><path d="M1 4q3 0 5 2l4 1-3 3q2 3 6 0 0 5-6 5T1 8z" fill="#f49a20" /><path d="M13 2q4 5 1 10" stroke="#fbd04e" fill="none" /></>,
  },
  {
    label: "Download Master",
    art: <><circle cx="8" cy="8" r="7.500" fill="#e4e4e4" stroke="#aaa" /><path d="M2 9a6 6 0 0 1 12 0l-3-2-3 4-3-4z" fill="#d1272a" /><path d="M8 4v8M5 9l3 3 3-3" stroke="#fff" fill="none" strokeWidth="1.500" /></>,
  },
];

const TASKS = [
  { title: "Справочник по Exc...", icon: <OperaIcon /> },
  {
    title: "информатика - Mic...",
    icon: (
      <svg viewBox="0 0 16 16" className="h-4 w-4" aria-hidden="true">
        <path d="M5 1h7l3 3v11H5z" fill="#f4f7fc" stroke="#5c7bb8" />
        <path d="M11 7h3M11 9h3M11 11h3M7 13h7" stroke="#6a8cc8" />
        <path d="M0 2h10v9H0z" fill="#2c5db0" />
        <path d="M2 4l1 5 2-4 2 4 1-5" fill="none" stroke="#fff" />
      </svg>
    ),
  },
  {
    title: "Microsoft Excel - Ли...",
    active: true,
    icon: (
      <svg viewBox="0 0 16 16" className="h-4 w-4" aria-hidden="true">
        <path d="M2 1h10l3 3v11H2z" fill="#eef8ec" stroke="#4d9a46" />
        <path d="M1 4h10v9H1z" fill="#f6fff4" stroke="#2f8a2c" />
        <path d="M3 6l6 6M9 6l-6 6" stroke="#2f8a2c" strokeWidth="2" />
      </svg>
    ),
  },
];

const TRAY = [
  <><path d="M8 1q3 2 7 1c0 7-2 11-7 13C3 13 1 9 1 2q4 1 7-1z" fill="#c4262c" stroke="#ddd" /><path d="M5 5l6 6M11 5l-6 6" stroke="#fff" strokeWidth="2" /></>,
  <><rect y="2" width="16" height="12" fill="#e91c14" /><path d="M1 11l4-5v5M6 6h5M8.500 6v5M13 6v5" stroke="#fff" strokeWidth="1.500" fill="none" /></>,
  <><path d="M2 1h6v4H2zM1 6h8v6H1z" fill="#8b9194" /><circle cx="11" cy="11" r="4.500" fill="#2aa536" /><path d="M9 11l2 2 3-4" stroke="#fff" fill="none" strokeWidth="1.500" /></>,
  <><path d="M9 2l6 2-4 11-6-2z" fill="#c3c6c8" stroke="#777" /><circle cx="4" cy="4" r="4" fill="#d51a1a" /><path d="M2 2l4 4M6 2L2 6" stroke="#fff" /></>,
  <><path d="M1 1h14v13H1z" fill="#e8e8e8" /><path d="M2 2h3v5l5-5h4L8 8l5 6H9L5 9v5H2z" fill="#c8202a" /><path d="M11 6l5 9H6z" fill="#f4c838" stroke="#8d6a10" /><path d="M11 9v4" stroke="#222" /></>,
  <><rect y="4" width="7" height="7" fill="#9fb4bd" stroke="#dde" /><circle cx="11" cy="5" r="4" fill="#e9b98b" /><path d="M6 9h9v3H6z" fill="#c8824c" /><path d="M11 16l-4-4h8z" fill="#2c92e2" /></>,
  <><rect width="16" height="16" fill="#fff" /><path d="M1 1h6L1 9z" fill="#7a3bd0" /><path d="M8 1h7v6z" fill="#ef3a3a" /><path d="M1 15V9l7 6z" fill="#18a848" /><path d="M9 15V7l6 8z" fill="#2648c8" /></>,
  <><rect x="1" y="1" width="15" height="11" fill="#8c8c8c" stroke="#23256e" /><path d="M1 14h6M10 14h6" stroke="#23256e" strokeWidth="2" /></>,
  <><path d="M0 3h14v9H0z" fill="#8b8f93" /><path d="M0 6h14M0 9h14M4 3v9M9 3v9" stroke="#5a5e62" /><circle cx="12" cy="11" r="4.500" fill="#eda222" /><path d="M12 8v4" stroke="#5a3a00" strokeWidth="1.500" /></>,
  <><path d="M4 3q-5 5 0 10M8 5q-3 3 0 7" stroke="#a0a428" fill="none" strokeWidth="1.500" /><path d="M12 1l3 4h-2v5h3l-4 5-4-5h3V5H9z" fill="#9cab36" /></>,
  <><rect width="16" height="16" fill="#1b8ede" /><circle cx="8" cy="7" r="1.500" fill="#fff" /><path d="M8 8v7M4 11q-3-5 0-8M12 11q3-5 0-8" stroke="#fff" fill="none" strokeWidth="1.500" /></>,
];

const SYSTEM_TRAY = [
  <><path d="M8 2h7v13H8z" fill="#d9f2d0" stroke="#fff" /><path d="M9 7h5v7H9z" fill="#8fd890" /><path d="M2 1v4M5 1v4M1 5h6v4H1zM4 9v6h4" stroke="#fff" fill="none" strokeWidth="1.500" /></>,
  <><path d="M5 1h10v8H5zM1 6h9v7H1z" fill="#333" stroke="#e8e8e8" /><path d="M8 8l7 7M15 8l-7 7" stroke="#e11a1a" strokeWidth="2.500" /></>,
  <><path d="M1 5h3l4-4v14l-4-4H1z" fill="#f0f0f0" /><path d="M10 5q2 3 0 6M12 3q4 5 0 10" stroke="#9de0a0" fill="none" strokeWidth="1.500" /></>,
];

const Taskbar = () => (
  <div className="relative flex h-[30px] items-center bg-[linear-gradient(#8d8f90_0%,#6b6d6e_20%,#4a4c4d_47%,#1c1e1f_50%,#0b0c0d_100%)] pl-[65px] text-white">
    <button aria-label="Пуск" className="absolute bottom-0 left-2 h-[35px] w-[44px] overflow-hidden">
      <svg viewBox="0 0 44 35" className="h-full w-full" aria-hidden="true">
        <circle cx="22" cy="21" r="20" fill="url(#start)" stroke="#18384f" strokeWidth="2" />
        <path d="M5 17a18 16 0 0 1 34 0q-17 5-34 0z" fill="#fff" opacity=".35" />
        <path d="M13 9q5-3 9-1l-2 10q-4-2-9 1z" fill="#e8622a" />
        <path d="M23 9q5 2 11-1l-2 10q-5 3-11 0z" fill="#8cc63e" />
        <path d="M11 20q5-3 9-1l-2 10q-4-2-9 1z" fill="#4ba6e4" />
        <path d="M21 20q5 2 11-1l-2 10q-5 3-11 0z" fill="#fcd034" />
      </svg>
    </button>
    <div className="flex gap-[7px]">
      {QUICK.map((q) => (
        <button key={q.label} aria-label={q.label}>
          {q.opera ? <OperaIcon /> : <svg viewBox="0 0 16 16" className="h-4 w-4" aria-hidden="true">{q.art}</svg>}
        </button>
      ))}
    </div>
    <div className="ml-[188px] flex gap-1">
      {TASKS.map((task) => (
        <button
          key={task.title}
          className={clsx(
            "flex h-7 w-[156px] items-center gap-1 rounded-[3px] border border-black px-2 text-[12px] leading-4 whitespace-nowrap shadow-[inset_0_0_0_1px_rgba(255,255,255,0.3)]",
            task.active ? "bg-[linear-gradient(#3c3e3f,#1b1c1d_48%,#050505)]" : "bg-[linear-gradient(#9a9c9d,#5c5e5f_48%,#1e2021_50%,#2e3031)]"
          )}
        >
          {task.icon}
          {task.title}
        </button>
      ))}
    </div>
    <div className="flex flex-1 items-center justify-end pr-4 pb-[3px] text-[12px] leading-4">
      <span>RU</span>
      <button aria-label="Показать скрытые значки" className="mr-2 ml-4">
        <svg viewBox="0 0 7 8" className="h-2 w-[7px]" aria-hidden="true">
          <path d="M6 0L2 4l4 4" fill="none" stroke="#fff" strokeWidth="2" />
        </svg>
      </button>
      <div className="flex gap-[2px]">
        {TRAY.map((art, i) => (
          <svg key={i} viewBox="0 0 16 16" className="h-4 w-4" aria-hidden="true">{art}</svg>
        ))}
      </div>
      <div className="ml-3 flex gap-[2px]">
        {SYSTEM_TRAY.map((art, i) => (
          <svg key={i} viewBox="0 0 16 16" className="h-4 w-4" aria-hidden="true">{art}</svg>
        ))}
      </div>
      <time className="ml-2">9:24</time>
    </div>
  </div>
);

// gradients shared by every drawing on the page
const Gradients = () => (
  <svg className="absolute h-0 w-0" aria-hidden="true">
    <defs>
      {[
        ["paper", "#ffffff", "#dfe8f3"],
        ["sky", "#a6d1f5", "#f0f8ff"],
        ["green", "#7cc06a", "#3f8f3c"],
        ["blueV", "#5fa4e8", "#1d4679"],
        ["yellowV", "#f9e440", "#b68c10"],
        ["redV", "#f4624a", "#c93a22"],
        ["light", "#f2f7fe", "#b9cbe9"],
        ["dark", "#a9bddf", "#4f74b8"],
      ].map(([id, from, to]) => (
        <linearGradient key={id} id={id} x1="0" y1="0" x2={id === "dark" || id === "light" ? "1" : "0"} y2="1">
          <stop offset="0" stopColor={from} />
          <stop offset="1" stopColor={to} />
        </linearGradient>
      ))}
      <linearGradient id="cyl">
        <stop offset="0" stopColor="#a9cdf2" />
        <stop offset=".4" stopColor="#ffffff" />
        <stop offset="1" stopColor="#6aa0dc" />
      </linearGradient>
      <linearGradient id="darkRound">
        <stop offset="0" stopColor="#6c8bc6" />
        <stop offset=".4" stopColor="#b7c9e8" />
        <stop offset="1" stopColor="#4468ad" />
      </linearGradient>
      <linearGradient id="lightRound">
        <stop offset="0" stopColor="#c8d8f0" />
        <stop offset=".4" stopColor="#fafcff" />
        <stop offset="1" stopColor="#b3c7e8" />
      </linearGradient>
      <radialGradient id="globe" cx=".5" cy=".4">
        <stop offset="0" stopColor="#b8dcfc" />
        <stop offset="1" stopColor="#1d55b8" />
      </radialGradient>
      <radialGradient id="orb" cx=".5" cy=".2" r=".9">
        <stop offset="0" stopColor="#ffffff" />
        <stop offset=".5" stopColor="#d5dce8" />
        <stop offset="1" stopColor="#f4f7fb" />
      </radialGradient>
      <radialGradient id="start" cx=".5" cy=".9" r=".8">
        <stop offset="0" stopColor="#43b7e8" />
        <stop offset=".7" stopColor="#1c587f" />
        <stop offset="1" stopColor="#577587" />
      </radialGradient>
    </defs>
  </svg>
);

export default function App() {
  const [tab, setTab] = useState("Вставка");

  return (
    <div className={clsx("relative flex h-screen flex-col overflow-hidden bg-[#bfdbff]", UI_FONT)}>
      <Gradients />
      <OfficeButton />
      <TitleBar />
      <TabStrip active={tab} onSelect={setTab} />
      <Ribbon />
      <FormulaBar />
      <Worksheet />
      <SheetBar />
      <StatusBar />
      <Taskbar />
    </div>
  );
}
